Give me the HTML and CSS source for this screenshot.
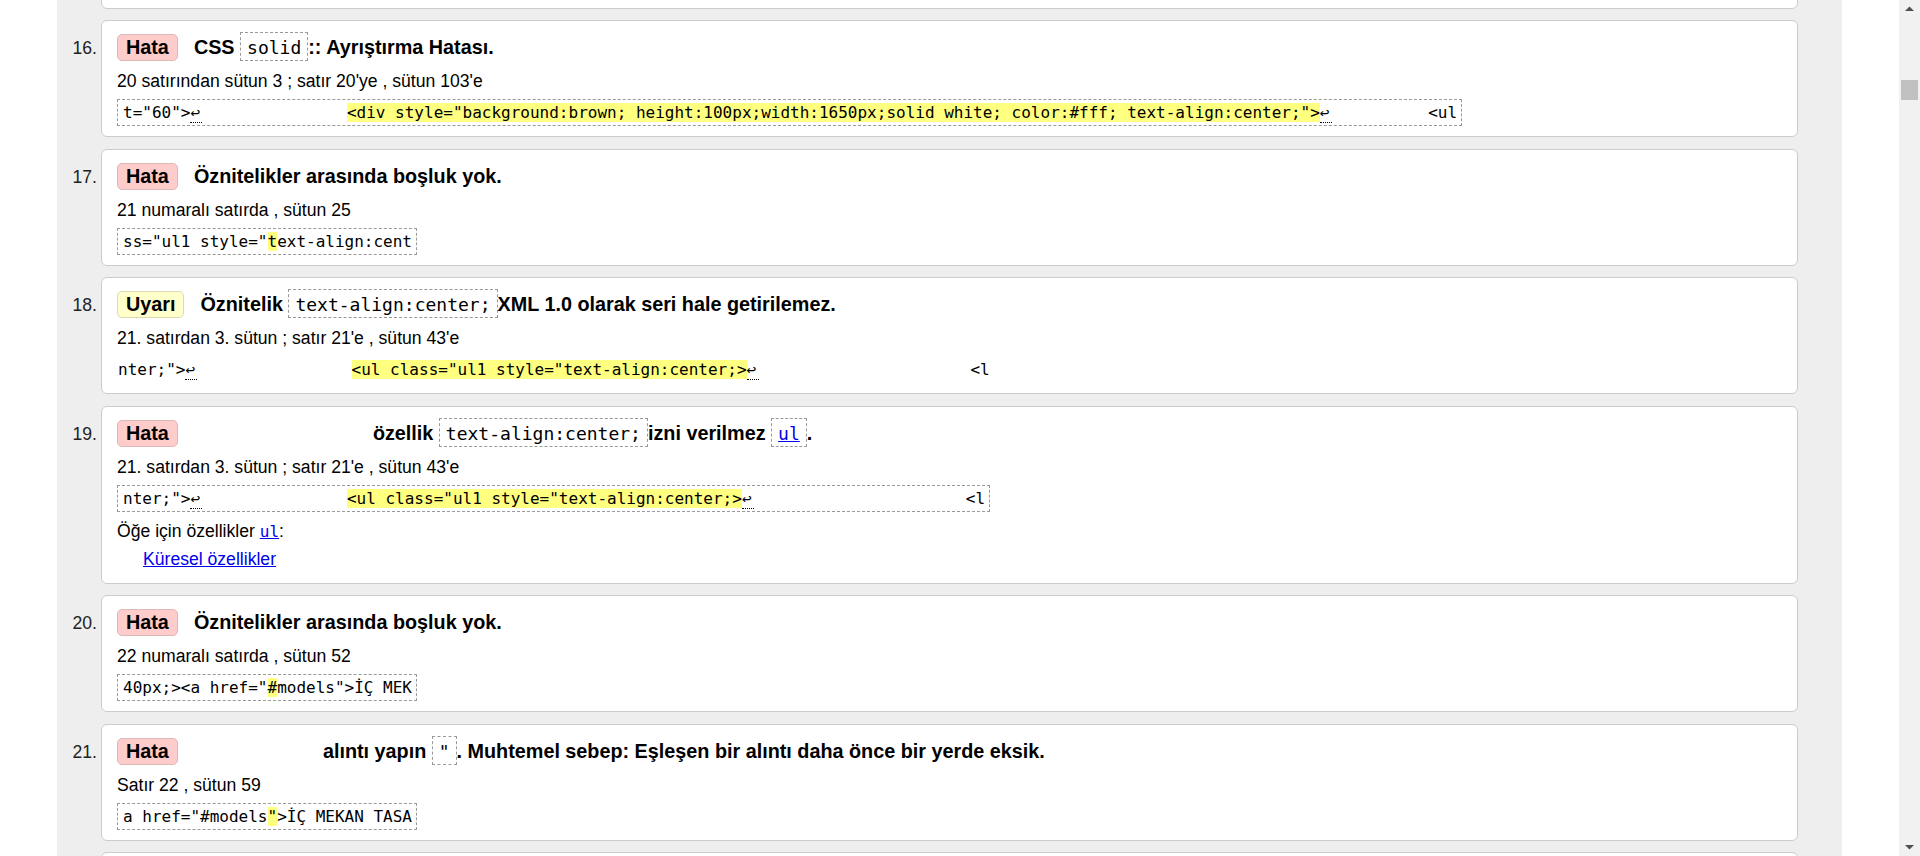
FILE: index.html
```html
<!DOCTYPE html>
<html lang="tr">
<head>
<meta charset="utf-8">
<title>Doğrulama sonuçları</title>
<link rel="stylesheet" href="styles.css">
</head>
<body>
<div class="window">
  <main class="page">
    <div class="results">
      <ol class="msgs">
        <li class="msg offscreen"><span class="num"></span><div class="card stub"></div></li>

        <li class="msg"><span class="num">16.</span><div class="card">
          <p class="title"><strong class="badge">Hata</strong>CSS <code>solid</code>:: Ayrıştırma Hatası.</p>
          <p class="loc">20 satırından sütun 3 ; satır 20'ye , sütun 103'e</p>
          <div class="extract">t="60"&gt;<span class="nl">↩</span>               <b>&lt;div style="background:brown; height:100px;width:1650px;solid white; color:#fff; text-align:center;"&gt;</b><span class="nl">↩</span>          &lt;ul</div>
        </div></li>

        <li class="msg"><span class="num">17.</span><div class="card">
          <p class="title"><strong class="badge">Hata</strong>Öznitelikler arasında boşluk yok.</p>
          <p class="loc">21 numaralı satırda , sütun 25</p>
          <div class="extract">ss="ul1 style="<b>t</b>ext-align:cent</div>
        </div></li>

        <li class="msg"><span class="num">18.</span><div class="card">
          <p class="title"><strong class="badge warn">Uyarı</strong>Öznitelik <code>text-align:center;</code>XML 1.0 olarak seri hale getirilemez.</p>
          <p class="loc">21. satırdan 3. sütun ; satır 21'e , sütun 43'e</p>
          <div class="extract plain">nter;"&gt;<span class="nl">↩</span>                <b>&lt;ul class="ul1 style="text-align:center;&gt;</b><span class="nl">↩</span>                      &lt;l</div>
        </div></li>

        <li class="msg"><span class="num">19.</span><div class="card">
          <p class="title"><strong class="badge">Hata</strong><span class="blank blank-attr"></span>özellik <code>text-align:center;</code>izni verilmez <code><a href="#ul">ul</a></code>.</p>
          <p class="loc">21. satırdan 3. sütun ; satır 21'e , sütun 43'e</p>
          <div class="extract">nter;"&gt;<span class="nl">↩</span>               <b>&lt;ul class="ul1 style="text-align:center;&gt;</b><span class="nl">↩</span>                      &lt;l</div>
          <p class="attrs">Öğe için özellikler <a class="mono" href="#ul">ul</a>:</p>
          <ul class="attr-list"><li><a href="#global">Küresel özellikler</a></li></ul>
        </div></li>

        <li class="msg"><span class="num">20.</span><div class="card">
          <p class="title"><strong class="badge">Hata</strong>Öznitelikler arasında boşluk yok.</p>
          <p class="loc">22 numaralı satırda , sütun 52</p>
          <div class="extract">40px;&gt;&lt;a href="<b>#</b>models"&gt;İÇ MEK</div>
        </div></li>

        <li class="msg"><span class="num">21.</span><div class="card">
          <p class="title"><strong class="badge">Hata</strong><span class="blank blank-quote"></span>alıntı yapın <code>"</code>. Muhtemel sebep: Eşleşen bir alıntı daha önce bir yerde eksik.</p>
          <p class="loc">Satır 22 , sütun 59</p>
          <div class="extract">a href="#models<b>"</b>&gt;İÇ MEKAN TASA</div>
        </div></li>

        <li class="msg offscreen"><span class="num"></span><div class="card stub"></div></li>
      </ol>
    </div>
  </main>
  <div class="scrollbar">
    <svg class="arrow" width="21" height="17" viewBox="0 0 21 17"><path d="M6 11 L10.5 6.5 L15 11 Z" fill="#505050"/></svg>
    <div class="thumb"></div>
    <div class="track-rest"></div>
    <svg class="arrow" width="21" height="17" viewBox="0 0 21 17"><path d="M6 6 L10.5 10.5 L15 6 Z" fill="#505050"/></svg>
  </div>
</div>
</body>
</html>
```

FILE: styles.css
```css
html, body {
  margin: 0;
  padding: 0;
}

body {
  font-family: "Liberation Sans", Arial, sans-serif;
  font-size: 17.6px;
  color: #000;
  background: #fff;
}

.window {
  display: flex;
  height: 856px;
  overflow: hidden;
}

.page {
  flex: 1;
  min-width: 0;
  overflow: hidden;
}

.results {
  display: flow-root;
  margin: 0 57px;
  background: #eee;
  padding: 0 44px 40px 0;
}

.msgs {
  list-style: none;
  margin: -108.5px 0 0;
  padding: 0;
}

.msg {
  display: flex;
  align-items: baseline;
  margin-bottom: 11.5px;
}

.msg.offscreen {
  align-items: flex-start;
}

.num {
  flex: 0 0 44px;
  text-align: right;
  padding-right: 4px;
  color: #222;
  box-sizing: border-box;
}

.card {
  flex: 1;
  min-width: 0;
  background: #fff;
  border: 1px solid #ccc;
  border-radius: 6px;
  padding: 10px 15px;
}

.card.stub {
  box-sizing: border-box;
  height: 117px;
}

.title {
  margin: 0 0 6px;
  font-size: 19.8px;
  font-weight: bold;
  line-height: 32px;
  white-space: nowrap;
}

.badge {
  display: inline-block;
  padding: 1px 8px;
  line-height: 23px;
  border: 1px solid #dcb8b8;
  border-radius: 5px;
  background: #fcc;
  margin-right: 16px;
}

.badge.warn {
  background: #ffc;
  border-color: #dedab0;
}

.title code {
  display: inline-block;
  font-family: "DejaVu Sans Mono", "Liberation Mono", monospace;
  font-size: 18px;
  font-weight: normal;
  line-height: 24px;
  padding: 3px 6px 0;
  border: 1px dashed #999;
}

.blank {
  display: inline-block;
}

.blank-attr {
  width: 179px;
}

.blank-quote {
  width: 129px;
}

.loc {
  margin: 0 0 6px;
  line-height: 24px;
}

.extract {
  display: block;
  width: max-content;
  font-family: "DejaVu Sans Mono", "Liberation Mono", monospace;
  font-size: 16px;
  line-height: 25px;
  white-space: pre;
  border: 1px dashed #999;
  padding: 0 4px 0 5px;
}

.extract.plain {
  border-color: transparent;
  padding-left: 0;
}

.extract b {
  font-weight: normal;
  background: #ffff80;
}

.nl {
  display: inline-block;
  width: 12px;
  line-height: 18px;
  border-bottom: 1px dotted #000;
}

a {
  color: #0000ee;
}

.mono {
  font-family: "DejaVu Sans Mono", "Liberation Mono", monospace;
  font-size: 16px;
}

.attrs {
  margin: 7px 0 0;
  line-height: 24px;
}

.attr-list {
  list-style: none;
  margin: 3px 0 2px;
  padding: 0 0 0 26px;
  line-height: 24px;
}

.scrollbar {
  flex: 0 0 21px;
  display: flex;
  flex-direction: column;
  background: #f1f1f1;
}

.arrow {
  display: block;
  flex: 0 0 17px;
}

.thumb {
  margin: 63px 2px 0;
  height: 20px;
  background: #c1c1c1;
}

.track-rest {
  flex: 1;
}
```
